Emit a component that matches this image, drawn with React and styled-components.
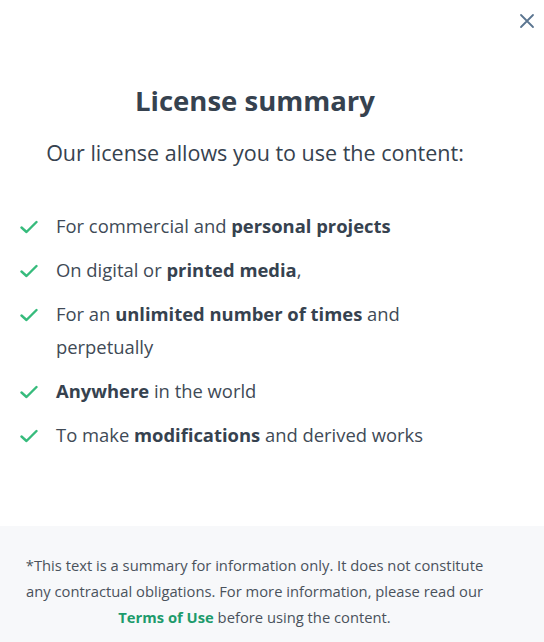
import React from 'react'
import styled, { createGlobalStyle } from 'styled-components'

const GlobalStyle = createGlobalStyle`
  html, body {
    margin: 0;
    padding: 0;
    background: #ffffff;
  }
  body {
    font-family: "Open Sans", Lato, sans-serif;
    color: #374250;
  }
`

const items = [
    <>For commercial and <b>personal projects</b></>,
    <>On digital or <b>printed media</b>,</>,
    <>For an <b>unlimited number of times</b> and perpetually</>,
    <><b>Anywhere</b> in the world</>,
    <>To make <b>modifications</b> and derived works</>,
]

function Check() {
    return (
        <svg width="18" height="14" viewBox="0 0 18 14" fill="none">
            <path d="M1.5 7.5L6.5 12L16.5 2" stroke="#36bb7c" strokeWidth="2.4" strokeLinecap="round" strokeLinejoin="round" />
        </svg>
    )
}

function App() {
    return (
        <>
            <GlobalStyle />
            <Modal>
                <Body>
                    <Close aria-label="Close">
                        <svg width="16" height="16" viewBox="0 0 16 16">
                            <path d="M2 2L14 14M14 2L2 14" stroke="#5b7590" strokeWidth="1.8" strokeLinecap="round" />
                        </svg>
                    </Close>
                    <Title>License summary</Title>
                    <Subtitle>Our license allows you to use the content:</Subtitle>
                    <List>
                        {items.map((item, i) => (
                            <Item key={i}>
                                <Icon><Check /></Icon>
                                <Text>{item}</Text>
                            </Item>
                        ))}
                    </List>
                </Body>
                <Footer>
                    *This text is a summary for information only. It does not constitute any contractual obligations. For more information, please read our <TermsLink href="#">Terms of Use</TermsLink> before using the content.
                </Footer>
            </Modal>
        </>
    )
}

export default App

const Modal = styled.div`
width: 544px;
height: 642px;
display: flex;
flex-direction: column;
background: #fff;
`;

const Body = styled.div`
position: relative;
height: 526px;
padding: 0 54px 0 20px;
box-sizing: border-box;
`;

const Close = styled.button`
position: absolute;
top: 12px;
right: 8px;
width: 18px;
height: 18px;
padding: 0;
border: none;
background: none;
cursor: pointer;
display: flex;
align-items: center;
justify-content: center;
`;

const Title = styled.h1`
margin: 0;
padding-top: 83px;
text-align: center;
font-size: 27.5px;
line-height: 36px;
font-weight: 700;
color: #36424f;
`;

const Subtitle = styled.p`
margin: 20px 0 0;
text-align: center;
font-size: 21.5px;
line-height: 28px;
font-weight: 500;
color: #36424f;
`;

const List = styled.ul`
list-style: none;
margin: 42px 0 0;
padding: 0;
display: flex;
flex-direction: column;
gap: 11px;
`;

const Item = styled.li`
display: flex;
align-items: flex-start;
font-size: 18.4px;
line-height: 33px;
color: #404a56;
b {
    font-weight: 700;
    color: #36424f;
}
`;

const Text = styled.span`
max-width: 400px;
`;

const Icon = styled.span`
flex: 0 0 36px;
height: 33px;
display: flex;
align-items: center;
padding-top: 3px;
box-sizing: border-box;
`;

const Footer = styled.div`
flex: 1;
background: #f7f8fa;
padding: 26px 52px 0 17px;
text-align: center;
font-size: 14.75px;
line-height: 26px;
color: #4a525c;
`;

const TermsLink = styled.a`
color: #1d9b6c;
font-weight: 700;
text-decoration: none;
`;
